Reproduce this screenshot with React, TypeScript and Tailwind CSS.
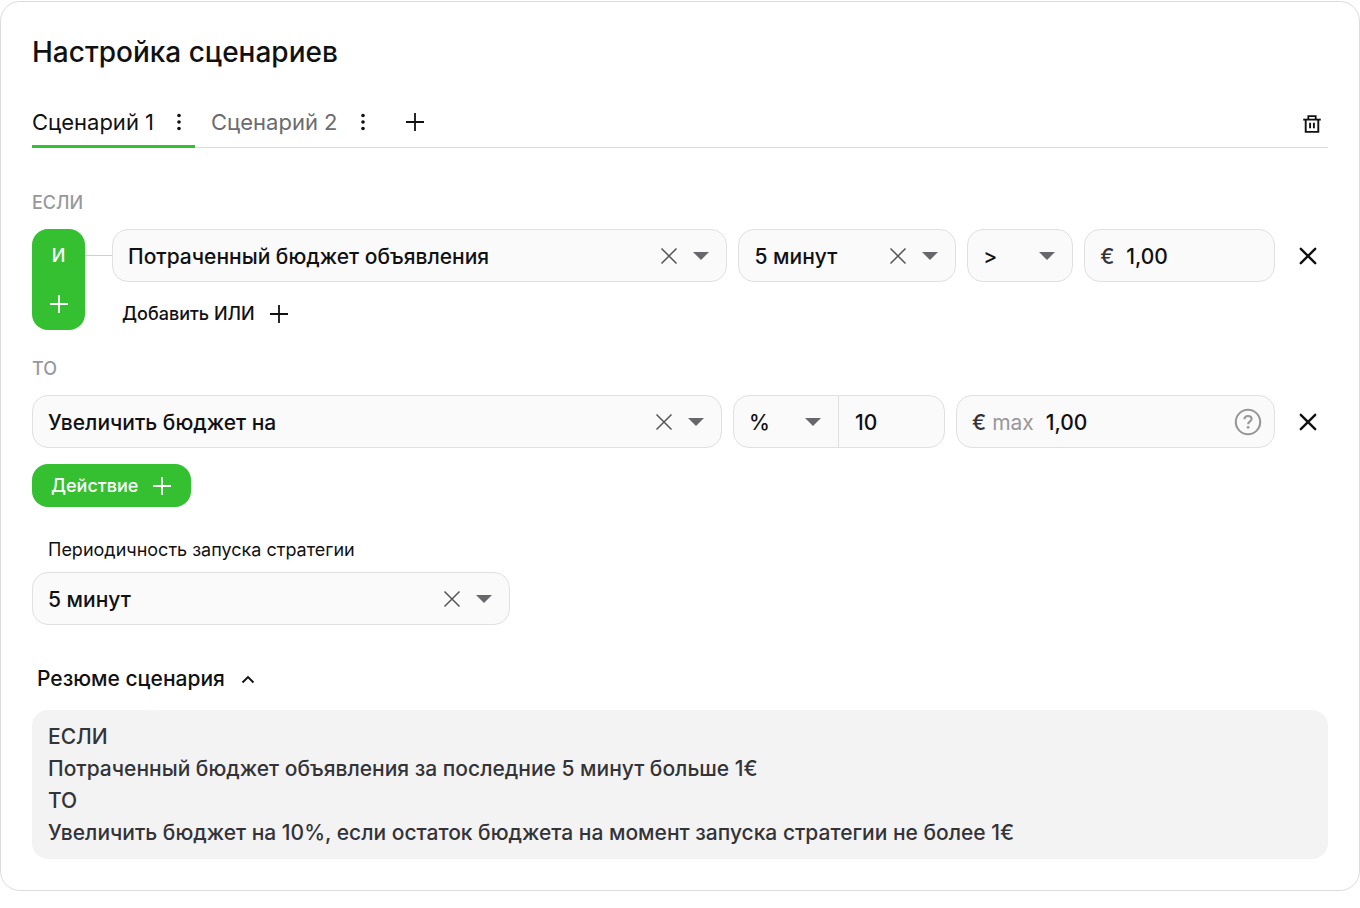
import React, { useState } from "react";

const periodOptions = ["5 минут", "15 минут", "30 минут", "1 час"];
const metricOptions = ["Потраченный бюджет объявления", "Количество кликов", "Количество показов"];
const actionOptions = ["Увеличить бюджет на", "Уменьшить бюджет на", "Остановить объявление"];

function PlusIcon() {
  return (
    <svg width="20" height="20" viewBox="0 0 20 20" fill="none" stroke="currentColor" strokeWidth="1.8" aria-hidden="true">
      <path d="M10 1v18M1 10h18" />
    </svg>
  );
}

function DotsIcon() {
  return (
    <svg width="6" height="18" viewBox="0 0 6 18" fill="currentColor" aria-hidden="true">
      <circle cx="3" cy="2.5" r="1.8" />
      <circle cx="3" cy="9" r="1.8" />
      <circle cx="3" cy="15.5" r="1.8" />
    </svg>
  );
}

function TrashIcon() {
  return (
    <svg width="20" height="20" viewBox="0 0 20 20" fill="none" stroke="currentColor" aria-hidden="true">
      <path d="M3.7 5.8V17.9H16.3V5.8" strokeWidth="1.9" />
      <path d="M1.2 5.6H18.8" strokeWidth="1.8" />
      <path d="M6.3 5V2.2H13.7V5" strokeWidth="1.8" />
      <path d="M8.1 8.8V14.2M11.9 8.8V14.2" strokeWidth="1.9" />
    </svg>
  );
}

function ClearIcon() {
  return (
    <svg width="18" height="18" viewBox="0 0 18 18" fill="none" stroke="currentColor" strokeWidth="1.5" aria-hidden="true">
      <path d="M1.5 1.5L16.5 16.5M16.5 1.5L1.5 16.5" />
    </svg>
  );
}

function RemoveIcon() {
  return (
    <svg width="18" height="18" viewBox="0 0 18 18" fill="none" stroke="currentColor" strokeWidth="2.4" strokeLinecap="round" aria-hidden="true">
      <path d="M1.8 1.8L16.2 16.2M16.2 1.8L1.8 16.2" />
    </svg>
  );
}

function CaretIcon() {
  return (
    <svg width="16" height="8" viewBox="0 0 16 8" fill="currentColor" className="pointer-events-none shrink-0 text-[#68686c]" aria-hidden="true">
      <path d="M0 0H16L8 8Z" />
    </svg>
  );
}

function HelpIcon() {
  return (
    <svg width="28" height="28" viewBox="0 0 28 28" fill="none" stroke="currentColor" strokeWidth="2.1" aria-hidden="true">
      <circle cx="14" cy="14" r="12.2" />
      <path d="M10.4 11.3C10.4 9.2 12 8 14 8C16 8 17.6 9.3 17.6 11.1C17.6 13.3 14.1 13.6 14.1 16.2" />
      <circle cx="14.1" cy="19.3" r="1.4" fill="currentColor" stroke="none" />
    </svg>
  );
}

interface SelectFieldProps {
  label: string;
  options: string[];
  clearable?: boolean;
  id?: string;
}

function SelectField({ label, options, clearable = false, id }: SelectFieldProps) {
  const [value, setValue] = useState(options[0]);

  return (
    <div className="flex h-full min-w-0 flex-1 items-center pr-[17px]">
      <select
        id={id}
        aria-label={label}
        value={value}
        onChange={(e) => setValue(e.target.value)}
        className="h-full min-w-0 flex-1 appearance-none truncate bg-transparent pl-[15px] pt-0.5 outline-none"
      >
        {clearable && <option value="" />}
        {options.map((option) => (
          <option key={option}>{option}</option>
        ))}
      </select>
      {clearable && (
        <button type="button" aria-label="Очистить" onClick={() => setValue("")} className="mr-[15px] shrink-0 text-[#56565a]">
          <ClearIcon />
        </button>
      )}
      <CaretIcon />
    </div>
  );
}

function FieldBox({ children }: { children: React.ReactNode }) {
  return (
    <div className="flex h-[53px] min-w-0 items-center rounded-2xl border border-[#e0e0e0] bg-[#fafafa]">
      {children}
    </div>
  );
}

function RemoveButton() {
  return (
    <button type="button" aria-label="Удалить строку" className="ml-6 mr-[11px] flex h-[53px] shrink-0 items-center">
      <RemoveIcon />
    </button>
  );
}

export default function App() {
  const [summaryOpen, setSummaryOpen] = useState(true);
  const [activeTab, setActiveTab] = useState(0);

  return (
    <div className="bg-white pt-px font-['Inter',sans-serif] text-[21px] font-medium text-[#111114]">
      <main className="rounded-[20px] border border-[#dcdcdc] px-[31px] pb-[31px] pt-8">
        <h1 className="text-[28px] leading-9">Настройка сценариев</h1>

        {/* Tabs */}
        <div className="mt-[26px] flex h-[52px] items-stretch border-b border-[#dcdcdc]">
          {["Сценарий 1", "Сценарий 2"].map((name, index) => (
            <div
              key={name}
              className={`-mb-px flex items-center border-b-3 pt-[3px] text-[22px] font-normal ${
                index === activeTab
                  ? "mr-4 border-[#34c030] pr-[13px]"
                  : "mr-[39px] border-transparent text-[#6b6b70]"
              }`}
            >
              <button type="button" onClick={() => setActiveTab(index)}>
                {name}
              </button>
              <button type="button" aria-label={`Меню: ${name}`} className="ml-[22px] text-[#111114]">
                <DotsIcon />
              </button>
            </div>
          ))}
          <button type="button" aria-label="Добавить сценарий">
            <PlusIcon />
          </button>
          <button type="button" aria-label="Удалить сценарий" className="ml-auto mr-[6px] pt-1">
            <TrashIcon />
          </button>
        </div>

        {/* Condition */}
        <h2 className="mt-[43px] text-[18px] leading-6 text-[#98989c]">ЕСЛИ</h2>
        <div className="mt-[14px] flex items-start">
          <div className="flex h-[101px] w-[53px] shrink-0 flex-col items-center justify-between rounded-2xl bg-[#34c030] pb-4 pt-[15px] text-white">
            <span className="text-[18px] leading-6">И</span>
            <button type="button" aria-label="Добавить условие">
              <PlusIcon />
            </button>
          </div>
          <div className="mt-[26px] h-px w-[27px] shrink-0 bg-[#cfcfcf]" />
          <div className="min-w-0 flex-1">
            <div className="grid grid-cols-[616fr_218fr_106fr_191fr] gap-[11px]">
              <FieldBox>
                <SelectField label="Показатель" options={metricOptions} clearable />
              </FieldBox>
              <FieldBox>
                <SelectField label="Период" options={periodOptions} clearable />
              </FieldBox>
              <FieldBox>
                <SelectField label="Сравнение" options={[">", "<", "="]} />
              </FieldBox>
              <FieldBox>
                <label htmlFor="threshold" className="pl-[15px] pt-0.5 text-[#333338]">€</label>
                <input id="threshold" defaultValue="1,00" className="ml-3 h-full min-w-0 flex-1 bg-transparent pt-0.5 outline-none" />
              </FieldBox>
            </div>
            <button type="button" className="ml-[10px] mt-5 flex items-center gap-[14px] text-[18px] leading-6">
              Добавить ИЛИ
              <PlusIcon />
            </button>
          </div>
          <RemoveButton />
        </div>

        {/* Action */}
        <h2 className="mt-[27px] text-[18px] leading-6 text-[#98989c]">ТО</h2>
        <div className="mt-[14px] flex items-start">
          <div className="grid min-w-0 flex-1 grid-cols-[690fr_212fr_319fr] gap-[11px]">
            <FieldBox>
              <SelectField label="Действие" options={actionOptions} clearable />
            </FieldBox>
            <FieldBox>
              <SelectField label="Единица" options={["%", "€"]} />
              <input
                aria-label="Размер изменения"
                defaultValue="10"
                className="h-full w-[106px] border-l border-[#e0e0e0] bg-transparent pl-4 pt-0.5 outline-none"
              />
            </FieldBox>
            <FieldBox>
              <label htmlFor="limit" className="flex gap-[6px] pl-[15px] pt-0.5 text-[#333338]">
                € <span className="font-normal text-[#98989c]">max</span>
              </label>
              <input id="limit" defaultValue="1,00" className="ml-3 h-full min-w-0 flex-1 bg-transparent pt-0.5 outline-none" />
              <button type="button" aria-label="Справка" className="mr-3 shrink-0 text-[#98989c]">
                <HelpIcon />
              </button>
            </FieldBox>
          </div>
          <RemoveButton />
        </div>
        <button type="button" className="mt-4 flex h-[43px] items-center gap-[14px] rounded-2xl bg-[#34c030] px-[19px] text-[18px] text-white">
          Действие
          <PlusIcon />
        </button>

        {/* Schedule */}
        <label htmlFor="frequency" className="mt-[31px] block pl-4 text-[18px] font-normal leading-6">
          Периодичность запуска стратегии
        </label>
        <div className="mt-[10px] max-w-[478px]">
          <FieldBox>
            <SelectField id="frequency" label="Периодичность запуска стратегии" options={periodOptions} clearable />
          </FieldBox>
        </div>

        {/* Summary */}
        <button
          type="button"
          aria-expanded={summaryOpen}
          onClick={() => setSummaryOpen(!summaryOpen)}
          className="ml-[5px] mt-10 flex items-center gap-4 leading-7"
        >
          Резюме сценария
          <svg
            width="14"
            height="9"
            viewBox="0 0 14 9"
            fill="none"
            stroke="currentColor"
            strokeWidth="1.9"
            className={summaryOpen ? "" : "rotate-180"}
            aria-hidden="true"
          >
            <path d="M1.5 7.5L7 2L12.5 7.5" />
          </svg>
        </button>
        {summaryOpen && (
          <div className="mt-[17px] rounded-2xl bg-[#f3f3f3] px-4 pb-[10px] pt-[11px] leading-8 text-[#333338]">
            <p>ЕСЛИ</p>
            <p>Потраченный бюджет объявления за последние 5 минут больше 1€</p>
            <p>ТО</p>
            <p>Увеличить бюджет на 10%, если остаток бюджета на момент запуска стратегии не более 1€</p>
          </div>
        )}
      </main>
    </div>
  );
}
